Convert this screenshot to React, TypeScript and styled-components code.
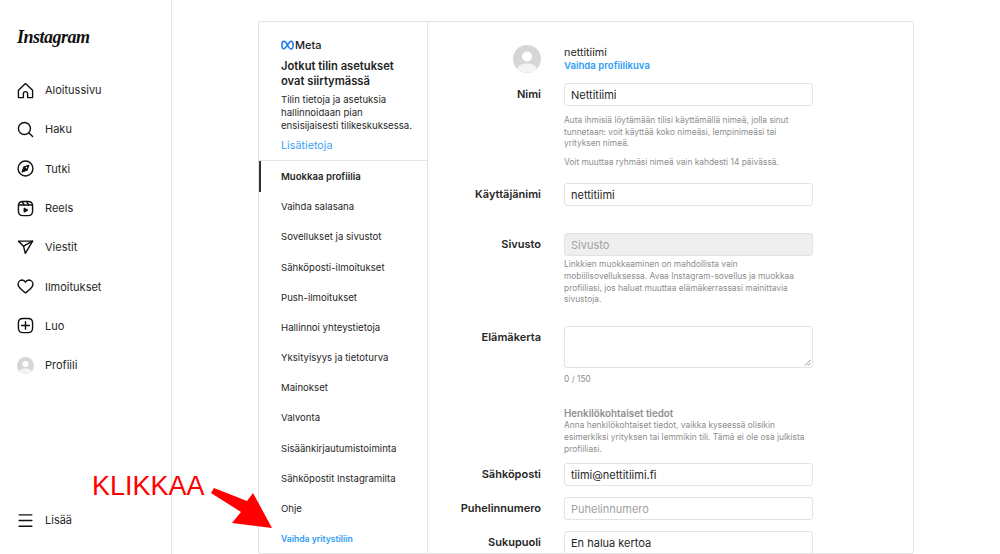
import React, { ReactNode } from "react";
import styled, { createGlobalStyle } from "styled-components";

const GlobalStyle = createGlobalStyle`
  html, body {
    margin: 0;
    padding: 0;
    height: 100%;
    overflow: hidden;
    background: #fff;
    font-family: Inter, "Liberation Sans", sans-serif;
    color: #262626;
  }
`;

const Page = styled.div`
  position: relative;
  display: flex;
  width: 1000px;
  height: 554px;
  overflow: hidden;
`;

const Sidebar = styled.nav`
  display: flex;
  flex-direction: column;
  box-sizing: border-box;
  width: 172px;
  height: 554px;
  border-right: 1px solid #e4e4e4;
  padding: 24px 0 14px 17px;
`;

const Logo = styled.div`
  height: 26px;
  font-family: "Liberation Serif", serif;
  font-style: italic;
  font-weight: 700;
  font-size: 18px;
  line-height: 26px;
  letter-spacing: -0.5px;
  color: #111;
  margin-bottom: 20.5px;
`;

const NavList = styled.div`
  display: flex;
  flex-direction: column;
  flex: 1;
`;

const NavItem = styled.div<{ $bottom?: boolean }>`
  display: flex;
  align-items: center;
  gap: 11px;
  height: 39.3px;
  font-size: 11px;
  color: #262626;
  margin-top: ${(p) => (p.$bottom ? "auto" : "0")};
`;

const IconSvg = styled.svg`
  width: 17px;
  height: 17px;
  flex: none;
  fill: none;
  stroke: #111;
  stroke-width: 2;
  stroke-linecap: round;
  stroke-linejoin: round;
`;

const Main = styled.main`
  flex: 1;
  padding: 21px 86px 0;
  min-width: 0;
`;

const Card = styled.section`
  display: flex;
  box-sizing: border-box;
  width: 656px;
  height: 533px;
  border: 1px solid #e4e4e4;
  border-radius: 2px;
  overflow: hidden;
`;

const SideMenu = styled.aside`
  flex: none;
  box-sizing: border-box;
  width: 169px;
  border-right: 1px solid #e4e4e4;
`;

const MetaBox = styled.div`
  box-sizing: border-box;
  height: 139.4px;
  padding: 17px 10px 0 22px;
  border-bottom: 1px solid #e4e4e4;
`;

const MetaBrand = styled.div`
  display: flex;
  align-items: center;
  gap: 1px;
  height: 12px;
  font-size: 11px;
  font-weight: 500;
  color: #1c1c1c;
`;

const MetaTitle = styled.h2`
  margin: 8px 0 0;
  font-size: 11.2px;
  line-height: 15px;
  font-weight: 600;
  color: #222;
`;

const MetaText = styled.p`
  margin: 4px 0 0;
  font-size: 9.6px;
  line-height: 13px;
  color: #262626;
  white-space: nowrap;
`;

const MetaLink = styled.div`
  margin-top: 6px;
  font-size: 10.8px;
  line-height: 15px;
  color: #3da2f5;
`;

const MenuItem = styled.div<{ $active?: boolean; $accent?: boolean }>`
  box-sizing: border-box;
  display: flex;
  align-items: center;
  height: 30.2px;
  padding-left: ${(p) => (p.$active ? "20px" : "22px")};
  border-left: ${(p) => (p.$active ? "2px solid #333" : "none")};
  font-size: ${(p) => (p.$accent ? "8.6px" : "9.6px")};
  font-weight: ${(p) => (p.$active || p.$accent ? 600 : 400)};
  color: ${(p) => (p.$accent ? "#2d9cf4" : "#262626")};
`;

const Form = styled.div`
  flex: 1;
  padding-top: 22px;
`;

const Row = styled.div<{ $mt?: number }>`
  display: grid;
  grid-template-columns: 113px 249px;
  column-gap: 23px;
  margin-top: ${(p) => p.$mt ?? 0}px;
`;

const Label = styled.div`
  padding-top: 4px;
  text-align: right;
  font-size: 11px;
  line-height: 15px;
  font-weight: 600;
  color: #262626;
`;

const Avatar = styled.svg`
  display: block;
  width: 28px;
  height: 28px;
  margin: 1px 0 -1px auto;
  border-radius: 50%;
`;

const SmallAvatar = styled(Avatar)`
  width: 17px;
  height: 17px;
  margin: 0;
  flex: none;
`;

const ProfileName = styled.div`
  padding-top: 2px;
  font-size: 10.8px;
  line-height: 13px;
  color: #262626;
`;

const ProfileLink = styled.div`
  font-size: 9.6px;
  line-height: 13px;
  font-weight: 600;
  color: #2d9cf4;
`;

const Field = styled.div<{ $disabled?: boolean; $placeholder?: boolean }>`
  box-sizing: border-box;
  height: 23px;
  padding: 0 6px;
  display: flex;
  align-items: center;
  border: 1px solid #e3e3e3;
  border-radius: 3px;
  font-size: 11px;
  color: ${(p) => (p.$disabled || p.$placeholder ? "#a0a0a0" : "#262626")};
  background: ${(p) => (p.$disabled ? "#efefef" : "#fff")};
`;

const TextArea = styled.div`
  position: relative;
  box-sizing: border-box;
  height: 42px;
  border: 1px solid #e3e3e3;
  border-radius: 3px;
`;

const Grip = styled.svg`
  position: absolute;
  right: 1px;
  bottom: 1px;
  width: 7px;
  height: 7px;
  stroke: #777;
  stroke-width: 0.8;
`;

const Help = styled.p<{ $mt?: number }>`
  margin: ${(p) => p.$mt ?? 0}px 0 0;
  font-size: 8.4px;
  line-height: 11.6px;
  color: #8e8e8e;
  white-space: nowrap;
`;

const Heading = styled.div`
  font-size: 9.8px;
  line-height: 13px;
  font-weight: 600;
  color: #8e8e8e;
`;

const Klikkaa = styled.div`
  position: absolute;
  left: 92px;
  top: 471px;
  font-family: "Liberation Sans", sans-serif;
  font-size: 27px;
  line-height: 31px;
  color: #ff0000;
`;

const ArrowSvg = styled.svg`
  position: absolute;
  left: 205px;
  top: 484px;
  width: 72px;
  height: 48px;
  fill: #ff0000;
`;

const Icon = ({ children }: { children: ReactNode }) => (
  <IconSvg viewBox="0 0 24 24">{children}</IconSvg>
);

const navItems: { label: string; icon: ReactNode }[] = [
  {
    label: "Aloitussivu",
    icon: <path d="M9.005 16.545a2.997 2.997 0 0 1 2.997-2.997A2.997 2.997 0 0 1 15 16.545V22h7V11.543L12 2 2 11.543V22h7.005Z" />,
  },
  {
    label: "Haku",
    icon: (
      <>
        <path d="M19 10.5A8.5 8.5 0 1 1 10.5 2a8.5 8.5 0 0 1 8.5 8.5Z" />
        <line x1="16.511" y1="16.511" x2="22" y2="22" />
      </>
    ),
  },
  {
    label: "Tutki",
    icon: (
      <>
        <polygon points="13.941 13.953 7.581 16.424 10.06 10.056 16.42 7.585 13.941 13.953" />
        <polygon points="10.06 10.056 13.949 13.945 7.581 16.424 10.06 10.056" fill="#111" />
        <circle cx="12" cy="12" r="10.5" />
      </>
    ),
  },
  {
    label: "Reels",
    icon: (
      <>
        <line x1="2.049" y1="7.002" x2="21.95" y2="7.002" />
        <line x1="13.504" y1="2.001" x2="16.362" y2="7.002" />
        <line x1="7.207" y1="2.11" x2="10.002" y2="7.002" />
        <path d="M2 12.001v3.449c0 2.849.698 4.006 1.606 4.945.94.908 2.098 1.607 4.946 1.607h6.896c2.848 0 4.006-.699 4.946-1.607.908-.939 1.606-2.096 1.606-4.945V8.552c0-2.848-.698-4.006-1.606-4.945C19.454 2.699 18.296 2 15.448 2H8.552c-2.848 0-4.006.699-4.946 1.607C2.698 4.546 2 5.704 2 8.552Z" />
        <path d="M9.763 17.664a.908.908 0 0 1-.454-.787V11.63a.909.909 0 0 1 1.364-.788l4.545 2.624a.909.909 0 0 1 0 1.575l-4.545 2.624a.91.91 0 0 1-.91 0Z" fill="#111" stroke="none" />
      </>
    ),
  },
  {
    label: "Viestit",
    icon: (
      <>
        <line x1="22" y1="3" x2="9.218" y2="10.083" />
        <polygon points="11.698 20.334 22 3.001 2 3.001 9.218 10.084 11.698 20.334" />
      </>
    ),
  },
  {
    label: "Ilmoitukset",
    icon: <path d="M16.792 2.9A5.99 5.99 0 0 1 22.5 9.122c0 3.3-2.9 5.4-5.6 7.8-2.5 2.2-4.2 3.8-4.9 4.2-.7-.4-2.5-2.1-4.9-4.2-2.7-2.4-5.6-4.5-5.6-7.8A5.99 5.99 0 0 1 7.208 2.9c2.1 0 3.8 1 4.8 3 1-2 2.7-3 4.784-3Z" />,
  },
  {
    label: "Luo",
    icon: (
      <>
        <path d="M2 12v3.45c0 2.849.698 4.005 1.606 4.944.94.909 2.098 1.608 4.946 1.608h6.896c2.848 0 4.006-.7 4.946-1.608C21.302 19.455 22 18.3 22 15.45V8.552c0-2.849-.698-4.006-1.606-4.945C19.454 2.7 18.296 2 15.448 2H8.552c-2.848 0-4.006.699-4.946 1.607C2.698 4.547 2 5.703 2 8.552Z" />
        <line x1="6.545" y1="12.001" x2="17.455" y2="12.003" />
        <line x1="12.003" y1="6.545" x2="12.003" y2="17.455" />
      </>
    ),
  },
];

const menuItems = [
  "Vaihda salasana",
  "Sovellukset ja sivustot",
  "Sähköposti-ilmoitukset",
  "Push-ilmoitukset",
  "Hallinnoi yhteystietoja",
  "Yksityisyys ja tietoturva",
  "Mainokset",
  "Valvonta",
  "Sisäänkirjautumistoiminta",
  "Sähköpostit Instagramilta",
  "Ohje",
];

const AvatarShape = () => (
  <>
    <rect width="28" height="28" fill="#d6d6d6" />
    <circle cx="14" cy="11.5" r="5" fill="#fff" />
    <path d="M3.5 24c2-4.2 6-5.6 10.5-5.6S22.500 19.800 24.500 24C21 29 7 29 3.500 24Z" fill="#f4f4f4" />
  </>
);

export default function App() {
  return (
    <Page>
      <GlobalStyle />
      <Sidebar>
        <Logo>Instagram</Logo>
        <NavList>
          {navItems.map((item) => (
            <NavItem key={item.label}>
              <Icon>{item.icon}</Icon>
              {item.label}
            </NavItem>
          ))}
          <NavItem>
            <SmallAvatar viewBox="0 0 28 28">
              <AvatarShape />
            </SmallAvatar>
            Profiili
          </NavItem>
          <NavItem $bottom>
            <Icon>
              <line x1="3" y1="4" x2="21" y2="4" />
              <line x1="3" y1="12" x2="21" y2="12" />
              <line x1="3" y1="20" x2="21" y2="20" />
            </Icon>
            Lisää
          </NavItem>
        </NavList>
      </Sidebar>
      <Main>
        <Card>
          <SideMenu>
            <MetaBox>
              <MetaBrand>
                <svg width="13" height="10" viewBox="0 0 26 20" fill="none" stroke="#1877f2" strokeWidth="3">
                  <path d="M13 10C10 4 8 2.500 5.800 2.500 3.300 2.500 1.800 5 1.800 9.500c0 4.500 1.500 8 4 8 2.500 0 4.200-3 7.200-7.500 3-4.500 4.700-7.500 7.200-7.500s4 3.500 4 7.500c0 4.500-1.500 8-4 8-2.200 0-4.200-2-7.200-7.500Z" />
                </svg>
                Meta
              </MetaBrand>
              <MetaTitle>
                Jotkut tilin asetukset
                <br />
                ovat siirtymässä
              </MetaTitle>
              <MetaText>
                Tilin tietoja ja asetuksia
                <br />
                hallinnoidaan pian
                <br />
                ensisijaisesti tilikeskuksessa.
              </MetaText>
              <MetaLink>Lisätietoja</MetaLink>
            </MetaBox>
            <MenuItem $active>Muokkaa profiilia</MenuItem>
            {menuItems.map((item) => (
              <MenuItem key={item}>{item}</MenuItem>
            ))}
            <MenuItem $accent>Vaihda yritystiliin</MenuItem>
          </SideMenu>
          <Form>
            <Row>
              <Avatar viewBox="0 0 28 28">
                <AvatarShape />
              </Avatar>
              <div>
                <ProfileName>nettitiimi</ProfileName>
                <ProfileLink>Vaihda profiilikuva</ProfileLink>
              </div>
            </Row>
            <Row $mt={11}>
              <Label>Nimi</Label>
              <div>
                <Field>Nettitiimi</Field>
                <Help $mt={9}>
                  Auta ihmisiä löytämään tilisi käyttämällä nimeä, jolla sinut
                  <br />
                  tunnetaan: voit käyttää koko nimeäsi, lempinimeäsi tai
                  <br />
                  yrityksen nimeä.
                </Help>
                <Help $mt={7}>Voit muuttaa ryhmäsi nimeä vain kahdesti 14 päivässä.</Help>
              </div>
            </Row>
            <Row $mt={15}>
              <Label>Käyttäjänimi</Label>
              <Field>nettitiimi</Field>
            </Row>
            <Row $mt={27}>
              <Label>Sivusto</Label>
              <div>
                <Field $disabled>Sivusto</Field>
                <Help $mt={3}>
                  Linkkien muokkaaminen on mahdollista vain
                  <br />
                  mobiilisovelluksessa. Avaa Instagram-sovellus ja muokkaa
                  <br />
                  profiiliasi, jos haluat muuttaa elämäkerrassasi mainittavia
                  <br />
                  sivustoja.
                </Help>
              </div>
            </Row>
            <Row $mt={20}>
              <Label>Elämäkerta</Label>
              <div>
                <TextArea>
                  <Grip viewBox="0 0 7 7">
                    <line x1="1" y1="6.500" x2="6.500" y2="1" />
                    <line x1="4" y1="6.500" x2="6.500" y2="4" />
                  </Grip>
                </TextArea>
                <Help $mt={6}>0 / 150</Help>
              </div>
            </Row>
            <Row $mt={22}>
              <div />
              <div>
                <Heading>Henkilökohtaiset tiedot</Heading>
                <Help>
                  Anna henkilökohtaiset tiedot, vaikka kyseessä olisikin
                  <br />
                  esimerkiksi yrityksen tai lemmikin tili. Tämä ei ole osa julkista
                  <br />
                  profiiliasi.
                </Help>
              </div>
            </Row>
            <Row $mt={8}>
              <Label>Sähköposti</Label>
              <Field>tiimi@nettitiimi.fi</Field>
            </Row>
            <Row $mt={11}>
              <Label>Puhelinnumero</Label>
              <Field $placeholder>Puhelinnumero</Field>
            </Row>
            <Row $mt={11}>
              <Label>Sukupuoli</Label>
              <Field>En halua kertoa</Field>
            </Row>
          </Form>
        </Card>
      </Main>
      <Klikkaa>KLIKKAA</Klikkaa>
      <ArrowSvg viewBox="205 484 72 48">
        <polygon points="214,488 247,501 253,493 272,528 232,523 241,512 211,493" />
      </ArrowSvg>
    </Page>
  );
}
